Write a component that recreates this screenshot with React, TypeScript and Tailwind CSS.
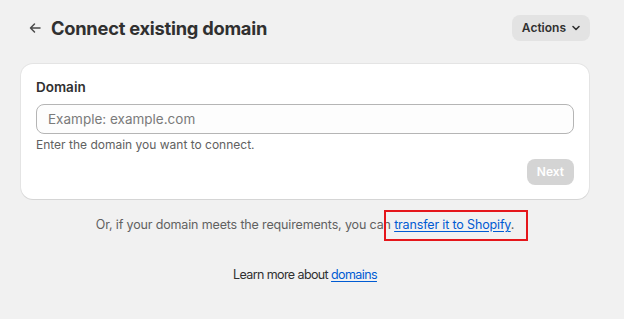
import React from "react";

export default function App() {
  return (
    <div
      className="min-h-[319px] w-full bg-[#f1f1f1] text-[#303030]"
      style={{ fontFamily: "Inter, 'Noto Sans', sans-serif" }}
    >
      <div className="px-[21px] pt-[15px]">
        <div className="flex items-center justify-between h-[26px]">
          <div className="flex items-center">
            <button className="w-[20px] h-[20px] ml-[4px] mr-[26px] flex items-center justify-center text-[#4a4a4a]">
              <svg width="14" height="14" viewBox="0 0 14 14" fill="none">
                <path d="M12 7H2.5M6.5 3L2.5 7l4 4" stroke="currentColor" strokeWidth="1.5" strokeLinecap="round" strokeLinejoin="round" />
              </svg>
            </button>
            <h1 className="text-[18.3px] font-bold tracking-[-0.25px] text-[#303030] leading-[26px] ml-[-20px]">
              Connect existing domain
            </h1>
          </div>
          <button className="mr-[13px] h-[26px] pl-[10px] pr-[8px] rounded-lg bg-[#e3e3e3] text-[12px] font-semibold text-[#303030] flex items-center gap-[4px]">
            Actions
            <svg width="12" height="12" viewBox="0 0 12 12" fill="none">
              <path d="M3 4.5l3 3 3-3" stroke="currentColor" strokeWidth="1.6" strokeLinecap="round" strokeLinejoin="round" />
            </svg>
          </button>
        </div>

        <div className="mt-[23px] w-[568px] bg-white rounded-xl shadow-[0_1px_0_0_rgba(26,26,26,0.07),0_0_0_1px_rgba(0,0,0,0.05)] px-[15px] pt-[13px] pb-[14px]">
          <div className="text-[13.5px] font-semibold text-[#303030] leading-[20px]">Domain</div>
          <div className="mt-[7px] h-[30px] rounded-lg border border-[#b5b5b5] bg-[#fdfdfd] flex items-center px-[11px]">
            <span className="text-[13.5px] text-[#7a7a7a]">Example: example.com</span>
          </div>
          <div className="mt-[3px] text-[12px] text-[#616161] leading-[16px]">Enter the domain you want to connect.</div>
          <div className="mt-[6px] flex justify-end">
            <button className="h-[26px] px-[10px] rounded-lg bg-[#d4d4d4] text-white text-[12px] font-semibold">Next</button>
          </div>
        </div>

        <div className="w-[568px] mt-[16px] flex justify-center">
          <p className="relative text-[12.5px] tracking-[-0.15px] text-[#616161] leading-[20px]">
            Or, if your domain meets the requirements, you can{" "}
            <span className="relative">
              <a className="text-[#005bd3] underline underline-offset-2">transfer it to Shopify</a>.
              <span className="absolute left-[-10px] right-[-14px] top-[-7px] bottom-[-9px] border-2 border-[#e5161b]" />
            </span>
          </p>
        </div>

        <div className="w-[568px] mt-[30px] flex justify-center">
          <p className="text-[12.5px] tracking-[-0.6px] text-[#303030] leading-[20px]">
            Learn more about <a className="text-[#005bd3] underline underline-offset-2">domains</a>
          </p>
        </div>
      </div>
    </div>
  );
}
